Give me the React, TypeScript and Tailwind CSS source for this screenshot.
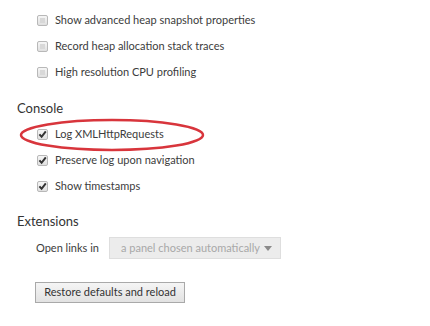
import React from "react";

const font = { fontFamily: 'Lato, "Noto Sans", sans-serif' };

function Box({ checked }: { checked?: boolean }) {
  return (
    <span className="relative flex h-[11px] w-[11px] shrink-0 items-center justify-center rounded-[2px] border border-[#b8b8b8] bg-gradient-to-b from-[#f6f6f6] to-[#e0e0e0]">
      {checked ? (
        <svg width="9" height="9" viewBox="0 0 9 9" className="absolute">
          <path d="M1.4 4.4 L3.6 6.8 L7.8 1.4" fill="none" stroke="#333" strokeWidth="2" />
        </svg>
      ) : (
        <span className="h-[5px] w-[5px] bg-[#d8d8d8]" />
      )}
    </span>
  );
}

function Row({ label, checked }: { label: string; checked?: boolean }) {
  return (
    <div className="flex h-[26px] items-center gap-[7px] pl-[37px]">
      <Box checked={checked} />
      <span className="whitespace-nowrap text-[11px] text-[#3c3c3c]">{label}</span>
    </div>
  );
}

export default function App() {
  return (
    <div className="relative h-[326px] w-[430px] overflow-hidden bg-white" style={font}>
      <div className="pt-[7px]">
        <Row label="Show advanced heap snapshot properties" />
        <Row label="Record heap allocation stack traces" />
        <Row label="High resolution CPU profiling" />
      </div>

      <div className="mt-[10px] pl-[17px] text-[13px] leading-[26px] text-[#333]">Console</div>
      <div>
        <Row label="Log XMLHttpRequests" checked />
        <Row label="Preserve log upon navigation" checked />
        <Row label="Show timestamps" checked />
      </div>

      <div className="mt-[9px] pl-[17px] text-[13px] leading-[26px] text-[#333]">Extensions</div>
      <div className="mt-[3px] flex items-center pl-[36px]">
        <span className="w-[73px] whitespace-nowrap text-[11px] text-[#3c3c3c]">Open links in</span>
        <div className="flex h-[22px] w-[172px] items-center justify-between border border-[#dedede] bg-[#ececec] pl-[11px] pr-[8px]">
          <span className="whitespace-nowrap text-[11px] text-[#a8a8a8]">a panel chosen automatically</span>
          <svg width="8" height="5" viewBox="0 0 8 5">
            <path d="M0 0 H8 L4 5 Z" fill="#8a8a8a" />
          </svg>
        </div>
      </div>

      <div className="mt-[19px] pl-[35px]">
        <button className="h-[21px] w-[150px] whitespace-nowrap border border-[#a9a9a9] bg-gradient-to-b from-[#f5f5f5] to-[#e2e2e2] text-[11px] text-[#333]">
          Restore defaults and reload
        </button>
      </div>

      <svg className="pointer-events-none absolute left-0 top-0" width="430" height="326">
        <ellipse cx="112" cy="135" rx="91" ry="15" fill="none" stroke="#d8353c" strokeWidth="2.5" />
      </svg>
    </div>
  );
}
